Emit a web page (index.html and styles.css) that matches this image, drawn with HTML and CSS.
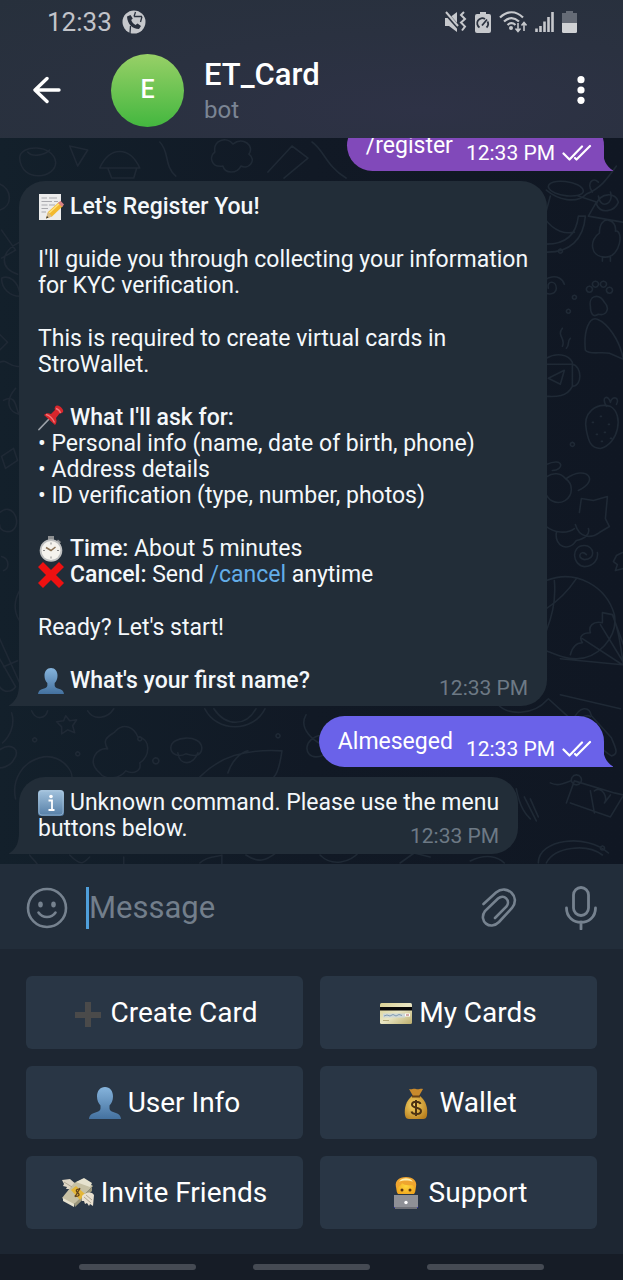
FILE: index.html
```html
<!DOCTYPE html>
<html lang="en">
<head>
<meta charset="utf-8">
<meta name="viewport" content="width=device-width, initial-scale=1">
<title>ET_Card</title>
<link rel="stylesheet" href="styles.css">
</head>
<body>
<svg class="defs" aria-hidden="true">
  <defs>
    <linearGradient id="g-bust" x1="0" y1="0" x2="0" y2="1"><stop offset="0" stop-color="#86b4dc"/><stop offset="1" stop-color="#44719f"/></linearGradient>
    <linearGradient id="g-info" x1="0" y1="0" x2="0" y2="1"><stop offset="0" stop-color="#a3c3de"/><stop offset="1" stop-color="#557ea6"/></linearGradient>
    <linearGradient id="g-card" x1="0" y1="0" x2="1" y2="1"><stop offset="0" stop-color="#d9cf90"/><stop offset=".5" stop-color="#e9e6c4"/><stop offset="1" stop-color="#bcae6c"/></linearGradient>
    <radialGradient id="g-bag" cx=".4" cy=".4" r=".7"><stop offset="0" stop-color="#f6d568"/><stop offset="1" stop-color="#b87f1e"/></radialGradient>
    <radialGradient id="g-face" cx=".5" cy=".5" r=".6"><stop offset="0" stop-color="#ffd63c"/><stop offset="1" stop-color="#f0a41c"/></radialGradient>
    <symbol id="bust" viewBox="0 0 32 32"><path fill="url(#g-bust)" d="M16 0c5 0 8 4 8 9.500c0 4-1.500 7-3.500 9v3c0 2 2 3 5 4c4 1.200 6 2.500 6.500 6.500H0c.5-4 2.500-5.300 6.500-6.500c3-1 5-2 5-4v-3c-2-2-3.500-5-3.500-9C8 4 11 0 16 0z"/></symbol>
    <symbol id="ticks" viewBox="0 0 30 18"><path d="M1.500 9.500 7.500 15.500 20 2.500M13 14 14.500 15.500 28 2" fill="none" stroke="#fff" stroke-width="2.200" stroke-linecap="round" stroke-linejoin="round"/></symbol>
    <symbol id="tail" viewBox="0 0 10 22"><path d="M10 0C10 11 7 17 0 21.500V22H10z" fill="currentColor"/></symbol>
  </defs>
</svg>

<div class="app">
  <header class="header">
    <div class="status">
      <span class="clock">12:33</span>
      <svg class="call" viewBox="0 0 24 24"><circle cx="12" cy="12" r="11.500" fill="#c6c8cc"/><path d="M5 6.500C5.500 14 10 19 17 19l2-3-3.500-2.500-2 1.500c-2-1-3.500-3-4.300-5l1.600-1.600L8.500 5z" fill="#2a313e"/><path d="M12 6.500 13.500 2M12 6.500h8M20 6.500 18.500 12M8.500 16 8 23" fill="none" stroke="#2a313e" stroke-width="1.300"/></svg>
      <span class="status-icons">
        <svg width="23" height="22" viewBox="0 0 23 22"><path d="M1 7h4l8-6v20l-8-6H1z" fill="#c6c8cc"/><path d="M0 0 15 17" stroke="#2b323f" stroke-width="4"/><path d="M2 1 14 15" stroke="#c6c8cc" stroke-width="2"/><path d="M20 1l-3 3 4 4-4 3.500 4 4-3 4" fill="none" stroke="#c6c8cc" stroke-width="2"/></svg>
        <svg width="16" height="22" viewBox="0 0 16 22"><path d="M5 1h6v3H5z" fill="#c6c8cc"/><rect x="0" y="3" width="16" height="19" rx="2" fill="#c6c8cc"/><path d="M4.500 16.500A5 5 0 0 1 10 8M12.500 10.500a5 5 0 0 1-1 6M7 14.500 12 8.500" fill="none" stroke="#2b323f" stroke-width="1.800"/></svg>
        <svg width="28" height="22" viewBox="0 0 28 22"><path d="M1 6.500C8-.5 17-.5 24 6.500M5 10.500c5-4.500 10-4.500 15 0M8.500 14c2.600-2.300 5.500-2.300 8 0" fill="none" stroke="#c6c8cc" stroke-width="2.200"/><circle cx="12" cy="17" r="2" fill="#c6c8cc"/><path d="M19 12v8M16.500 17.500 19 20.500l2.500-3M25 20v-8M22.500 14.500 25 11.500l2.500 3" fill="none" stroke="#c6c8cc" stroke-width="1.600"/></svg>
        <svg width="19" height="22" viewBox="0 0 19 22"><path d="M1.500 17.500V21M5.500 15V21M9.500 10.500V21M13.500 6V21M17.500 1V21" stroke="#c6c8cc" stroke-width="2.600"/></svg>
        <svg width="15" height="22" viewBox="0 0 15 22"><path d="M4 0h7v2h4v10H0V2h4z" fill="#656b76"/><path d="M0 12h15v8.500a1.500 1.500 0 0 1-1.500 1.500h-12A1.500 1.500 0 0 1 0 20.500z" fill="#d0d2d5"/></svg>
      </span>
    </div>
    <div class="titlebar">
      <button class="icon-btn" aria-label="Back"><svg width="28" height="28" viewBox="0 0 28 28"><path d="M26 14H2.500M14 2.500 2 14l12 11.500" fill="none" stroke="#fff" stroke-width="3.400" stroke-linecap="round" stroke-linejoin="round"/></svg></button>
      <div class="avatar">E</div>
      <div class="peer">
        <h1 class="peer-name">ET_Card</h1>
        <span class="peer-kind">bot</span>
      </div>
      <button class="icon-btn" aria-label="More options"><svg width="8" height="28" viewBox="0 0 8 28"><circle cx="4" cy="3.700" r="3.600" fill="#fff"/><circle cx="4" cy="14" r="3.600" fill="#fff"/><circle cx="4" cy="24.300" r="3.600" fill="#fff"/></svg></button>
    </div>
  </header>

  <main class="chat">
    <svg class="doodles" viewBox="0 0 623 725" preserveAspectRatio="xMidYMid slice" aria-hidden="true">
      <g fill="none" stroke-width="1.600" stroke-linecap="round" stroke-linejoin="round">
        <path d="M20 20c0-14 34-14 36 4 1 16-34 22-36-4zM28 14c4 5 16 4 22-2M70 8l18 4-10 16zM100 30c10-22 30-22 40 0zM108 30l4 10h22l3-10M160 4c10 10 4 24 16 34M215 14c-2-12 12-16 18-8 10-8 22 2 16 10 8 6 0 16-8 12-4 8-16 8-18 0-12 2-14-10-8-14zM268 34l24-26 16 12-24 20M312 4c12 8 14 24 34 36"/>
        <path d="M0 46c12 4 14 22 0 26M2 92l14 20-14 8M20 104c-20 10-20 26-2 32M2 140c8-4 16 4 18 14M2 140c0 10 8 18 18 18M0 196l8 8-8 8M0 224c8-4 10 6 20 4M4 262c14-8 12 12 16 14M16 250c-12 14-6 24 4 26M2 318l12-8 4 12-12 8zM0 374c12-10 20 6 16 14s-16 6-16-2M2 418c8 2 8 12 2 14M20 452c-10 18 0 30 0 30M0 500l20 44M0 520l16 28c-4 6-12 6-16 0M4 528l14-6"/>
        <path d="M12 574c4 12-2 24-9 30M32 572c4 10 14 8 16 0M66 577l4 5 7-1-4 6 2 7-7-3-6 4 0-7-5-5 7-1zM88 572c6 10 20 8 26-2M100 634c-14-12-2-26 8-24-8-12 6-14 8-18 8-8 18-4 22 6 14 2 12 20 2 26 2 8-6 12-14 8-6 8-20 10-26 2zM171 609c0-12 30-14 31 0 0 10-10 8-16 6-8 4-15 0-15-6zM178 614c2 14 16 12 20 0M16 660c-4-18 6-38 28-42 18-2 30 14 28 22M0 611c12-8 22 0 14 10-4 8-14 8-14 8M205 570c12 24 48 24 60 0M214 570c12 18 32 18 42 0M200 638c20-20 44-28 82-26-2 14-4 22-8 26M228 634c4-12 12-20 20-22M306 576c-8 14 8 26 16 30M322 596c-20 4-18 22-6 22s16-14 16-14"/>
        <path d="M30 716c2 4 12 10 8 16M70 716c12 12 14 8 20 2M124 718v12M200 724c8-8 20-6 22-8v10M246 716c12 8 20 6 30-2M320 716c12 12 30 8 40-4M400 724l14-10 16 4M470 722c16-8 28-4 34 2"/>
        <path d="M546 52c12 10 30 14 40 4 14-6 20-14 30-28M548 49c0-10 34-6 35 4 0 8-32 6-35-4zM550 58l-6 22c10 14 22 16 30 14M578 58l18 6-8 14 34 6M598 58c2 14 16 8 12-4M592 54c-6-8 0-16 6-10M596 66c4-12 20-12 22-2-4 10-18 12-22 2zM546 106c20 0 30-10 32-28h7c-2 24-16 36-38 36M599 95c0-20 18-14 16-2 8-2 6 26-10 26-16 0-16-18-6-24zM602 119v4M610 119v4M548 150c-2-8 8-8 8 0s-14 8-14-2 18-14 22-2M590 168c-2-10 8-14 14-4 6 6 2 14-6 12-6 4-8-2-8-8zM589 148a3 3 0 1 0 .1 0M595 143a3 3 0 1 0 .1 0M603 143a3 3 0 1 0 .1 0M609 149a3 3 0 1 0 .1 0M585 212c-2-20 4-34 12-31 10 4 22 20 26 40l-14-6c-8-2-20 2-24-3zM562 190c-6 8 4 10 0 18M570 200c-4 4 0 6-4 10"/>
        <path d="M546 220c10-6 22-4 26 4v24c-6 12-20 10-26 10M546 226h26M572 226c10 2 10 22 0 22M548 240l16-8-4 14zM586 292c-4-18 10-28 24-24 14 8 8 38-10 42-10 0-12-8-14-18zM606 268c-6-10 2-12 4-4 2-8 10-4 6 2M592 284h1M600 278h1M608 286h1M596 296h1M604 294h1M610 300h1M601 303h1"/>
        <path d="M546 326c18-8 18 6 6 6M545 352a13 13 0 1 0 20-12 13 13 0 0 0-18-2M566 340c20-14 34 2 12 12M579 374l2-14 12 2 14-4-2 22 4 8-10 6c-8 6-20 6-24-8M556 394c-2 14 12 20 20 8 8-2 14-6 12-12M546 388c8 6 20 8 28 2M586 416c-6-6-10 4-2 5 12 0 10-14 0-14-14 0-12 20 0 21 10 0 14-8 13-14M622 414l-6 3-3 6 4 3-2 6 8-2"/>
        <path d="M546 442c30-12 60 6 68 34 4 24-18 44-38 44-12 0-20-4-30-8M546 470c12-8 22-18 30-30M554 442c2 20-4 40-8 50M612 476l-10-2v10c-10-2-14 4-12 10-8 0-12 4-8 10-6 0-10 4-12 12M612 476l11 30M600 486l22 36M582 500l40 26M560 520l62 6M612 476c6 14 8 30 11 50"/>
        <path d="M573 581c6-14 16-14 18-4l20 22c4 10 8 16 0 18-8-4-24-22-26-28-8 2-12-2-12-8zM578 584c4-8 10-8 12-6M548 560l20 18M560 556l60 14M566 664l8-22 40 12 9 2M570 664l40 14 12-20M590 652l4 22M594 652c8-6 14 8 10 12l6-8M576 636a5 5 0 1 0 .1 0M516 650c4 20 10 26 14 30M524 658l12 24M530 660l8 18M538 724c0-24 48-30 70-10M546 724c8-16 40-20 56-8M550 644c8 4 14 0 20-2M497 565c10 12 36 12 50-4"/>
        <path d="M140 598a2 2 0 1 0 .1 0M35 599a2 2 0 1 0 .1 0M78 613a2 2 0 1 0 .1 0M156 619a3 3 0 1 0 .1 0M278 595a2 2 0 1 0 .1 0M560 111a2 2 0 1 0 .1 0M574 157a2 2 0 1 0 .1 0M568 171a2 2 0 1 0 .1 0M572 304a2 2 0 1 0 .1 0M542 615a2 2 0 1 0 .1 0M602 707a2 2 0 1 0 .1 0"/>
      </g>
    </svg>

    <div class="bubble out out-register">
      <span class="out-text">/register</span>
      <time class="stamp">12:33 PM</time>
      <svg class="ticks"><use href="#ticks"/></svg>
      <svg class="tail"><use href="#tail"/></svg>
    </div>

    <article class="bubble in">
      <p><svg class="emoji" viewBox="0 0 26 26"><path d="M1 0h22v26H1z" fill="#ececec"/><path d="M3.500 4H9M11 4h8M3.500 7.500H14M16 7.500h4M3.500 11h6M11 11h6M3.500 14.500H10M3.500 18H8" stroke="#a9a9ae" stroke-width="1"/><path d="M8 24.500 10 18 21 8l4 4L14 22.500z" fill="#f2b92f"/><path d="M11 19 22 9" stroke="#ffe27a" stroke-width="1.500"/><path d="M20 9l2.500-2.200 3.500 3.700-2 2.500z" fill="#d98183"/><path d="M8 24.500 10 18l4 4.500z" fill="#d8bd8c"/><path d="M8 24.500l1-2.500 1.500 1.500z" fill="#333"/></svg><strong>Let's Register You!</strong></p>
      <p>I'll guide you through collecting your information<br>for KYC verification.</p>
      <p>This is required to create virtual cards in<br>StroWallet.</p>
      <div>
        <p><svg class="emoji" viewBox="0 0 26 26"><path d="M1 24.500 12 13" stroke="#9ba1a8" stroke-width="1.800" stroke-linecap="round"/><path d="M17 2c1-2 3-2 5-.5s4 4 3 5.500-2.500 1.500-3.500 1.500L18 13c1 3 .5 5.500-1 7L6 10c2-2 4.500-2 7-1l4-4c-.5-1-.5-2 0-3z" fill="#d8262c"/><path d="M18 3.500c2 .5 4 3 4.500 4.500M8 9.500c3 .500 7 4 8.500 8" fill="none" stroke="#f4787a" stroke-width="1.300"/></svg><strong>What I'll ask for:</strong></p>
        <ul class="asks">
          <li>Personal info (name, date of birth, phone)</li>
          <li>Address details</li>
          <li>ID verification (type, number, photos)</li>
        </ul>
      </div>
      <p><svg class="emoji" viewBox="0 0 26 26"><path d="M10 0h6v4h-6zM20 3.500l3 2.500-2 2.500-3-2.500z" fill="#8d8f91"/><circle cx="13" cy="14.500" r="11.300" fill="#bfc0c0"/><circle cx="13" cy="14.500" r="9.500" fill="#f5f3ee"/><path d="M13 6.500v2M13 20.500v2M5 14.500h2M19 14.500h2" stroke="#8a8a8a"/><path d="M8 11.500 13 14.500 17.500 11" fill="none" stroke="#8b7355" stroke-width="1.500"/></svg><strong>Time:</strong> About 5 minutes<br><svg class="emoji" viewBox="0 0 26 26"><path d="M5 0l8 8 8-8 5 5-8 8 8 8-5 5-8-8-8 8-5-5 8-8-8-8z" fill="#ee1111"/></svg><strong>Cancel:</strong> Send <a href="#cancel">/cancel</a> anytime</p>
      <p>Ready? Let's start!</p>
      <div class="foot">
        <p><svg class="emoji"><use href="#bust"/></svg><strong>What's your first name?</strong></p>
        <time class="stamp">12:33 PM</time>
      </div>
      <svg class="tail"><use href="#tail"/></svg>
    </article>

    <div class="bubble out out-name">
      <span class="out-text">Almeseged</span>
      <time class="stamp">12:33 PM</time>
      <svg class="ticks"><use href="#ticks"/></svg>
      <svg class="tail"><use href="#tail"/></svg>
    </div>

    <article class="bubble in">
      <div>
        <p><svg class="emoji" viewBox="0 0 26 26"><rect width="26" height="26" rx="3.500" fill="url(#g-info)"/><rect x="1" y="1" width="24" height="24" rx="3" fill="none" stroke="#b4cce2" stroke-opacity=".5"/><circle cx="13" cy="6.500" r="1.800" fill="#fff"/><path d="M10.500 10.500h3.500V20M10.500 20h6" fill="none" stroke="#fff" stroke-width="1.800"/></svg>Unknown command. Please use the menu</p>
        <div class="foot">
          <p>buttons below.</p>
          <time class="stamp">12:33 PM</time>
        </div>
      </div>
      <svg class="tail"><use href="#tail"/></svg>
    </article>
  </main>

  <form class="composer">
    <button type="button" class="icon-btn" aria-label="Emoji"><svg width="42" height="42" viewBox="0 0 42 42"><circle cx="21" cy="21" r="19" fill="none" stroke="#76828f" stroke-width="2.600"/><ellipse cx="14.500" cy="17.500" rx="2.300" ry="3" fill="#76828f"/><ellipse cx="27.500" cy="17.500" rx="2.300" ry="3" fill="#76828f"/><path d="M12.500 25.500c4 6 13 6 17 0" fill="none" stroke="#76828f" stroke-width="2.600" stroke-linecap="round"/></svg></button>
    <span class="caret"></span>
    <input class="field" type="text" placeholder="Message" aria-label="Message">
    <button type="button" class="icon-btn clip" aria-label="Attach"><svg width="36" height="42" viewBox="0 0 36 42"><path d="M2.500 17 15 5.500C26-3.500 40 10 31 21L18 35C9 44-3 34 4 24L17 11.500c6-5 13 2 8.500 8L14 31" fill="none" stroke="#76828f" stroke-width="2.600" stroke-linecap="round"/></svg></button>
    <button type="button" class="icon-btn" aria-label="Voice message"><svg width="32" height="44" viewBox="0 0 32 44"><rect x="8.500" y="1.500" width="15" height="28" rx="7.500" fill="none" stroke="#76828f" stroke-width="2.800"/><path d="M1.500 22c0 19 29 19 29 0M16 36v7" fill="none" stroke="#76828f" stroke-width="2.800" stroke-linecap="round"/></svg></button>
  </form>

  <section class="keyboard" aria-label="Bot menu">
    <button class="key"><svg class="key-emoji" viewBox="0 0 32 32"><path d="M13 5h6v10h10v6H19v9h-6v-9H3v-6h10z" fill="#4a4a4a"/></svg>Create Card</button>
    <button class="key"><svg class="key-emoji" viewBox="0 0 32 32"><rect y="6" width="32" height="21" rx="1.500" fill="url(#g-card)"/><path d="M0 10h32v3.500H0z" fill="#080808"/><path d="M3 16.500h22v4H3z" fill="#cfd8d8"/><path d="M4 19l3-1 3 1 3-1.500 3 1.500 3-1.500 3 1" fill="none" stroke="#7f9bb3"/><path d="M25 16.500h5v3h-5z" fill="#fff"/><path d="M26 18h3" stroke="#a55"/><path d="M3 23.500h6" stroke="#b4ab7c"/></svg>My Cards</button>
    <button class="key"><svg class="key-emoji"><use href="#bust"/></svg>User Info</button>
    <button class="key"><svg class="key-emoji" viewBox="0 0 32 32"><path d="M9 2c3 1 4-1 7 0s4-1 7 0l-4 7h-6z" fill="#c98a2c"/><path d="M12 9h8c6 5 8 12 7 19-.5 3-2 4-4 4H9c-2 0-3.500-1-4-4-1-7 1-14 7-19z" fill="url(#g-bag)"/><path d="M12 9.500h8" stroke="#6b4315" stroke-width="2"/><path d="M20.500 17c-1-3-8.500-3-8.500.5 0 4.500 9 2 9 6.500 0 4-8.500 4-9.500.5M16 13v16" fill="none" stroke="#4b3213" stroke-width="2"/></svg>Wallet</button>
    <button class="key"><svg class="key-emoji" viewBox="0 0 32 32"><path d="M0 3l8-1 7 6-3 7-5-1 1-2-4 0 1-2-4-1 1-2z" fill="#ddd5c4"/><path d="M12 6l9-4 10 7-17 17-4 2-10-7z" fill="#c6c0a4"/><path d="M1 21l11 6v3L1 24zM14 5l8-4 8 5-2 4z" fill="#e6e2cf"/><path d="M12 27 30 10v4L13 30z" fill="#9c977c"/><path d="M9 13l5-4 9 8-5 6z" fill="#e4b638"/><path d="M18 13c-2-2-5 0-3 2s3 3 1 4-3-1-3-1M18 11l-5 9" fill="none" stroke="#62421a" stroke-width="1.300"/><path d="M20 19c3-4 10-5 12-1l-1 11-3-2-1 2-2-3-2 1-1-3-2 0z" fill="#e8e0d0"/><path d="M2 5l8 5M22 20l7 6M24 18l6 5" stroke="#a89f8c" stroke-width=".9"/></svg>Invite Friends</button>
    <button class="key"><svg class="key-emoji" viewBox="0 0 32 32"><path d="M4 31c-1-10 4-12 12-12s13 2 12 12z" fill="#3a3ab0"/><path d="M7 9c0-10 18-10 18 0 1 3 .5 6-1 8H8c-1.500-2-2-5-1-8z" fill="url(#g-face)"/><path d="M7 13C3 4 9 0 16 0s13 4 9 13c-.5-3-1.500-4.500-3-5-5 .5-8 0-10-2-1 3-4 3-5 7z" fill="#efa52f"/><path d="M9 4.500c3-4.500 11-4.500 14 0-4-1.500-10-1.500-14 0z" fill="#fff0ad"/><circle cx="12" cy="13" r="1.500" fill="#5b3512"/><circle cx="20" cy="13" r="1.500" fill="#5b3512"/><path d="M4 18h24v12H4z" fill="#8e9096"/><path d="M5 30h22v2H5z" fill="#6f7178"/><circle cx="16" cy="25.500" r="1.700" fill="#fff"/></svg>Support</button>
  </section>

  <nav class="navbar" aria-label="System navigation">
    <button class="pill" aria-label="Recents"></button>
    <button class="pill" aria-label="Home"></button>
    <button class="pill" aria-label="Back"></button>
  </nav>
</div>
</body>
</html>
```
FILE: styles.css
```css
* {
  box-sizing: border-box;
}

body {
  margin: 0;
  font-family: Roboto, "Noto Sans", sans-serif;
  font-size: 23px;
  line-height: 26px;
  color: #f4f8fb;
  background: #1d2632;
}

p,
ul,
h1 {
  margin: 0;
  padding: 0;
}

button {
  padding: 0;
  border: 0;
  background: none;
  font: inherit;
  color: inherit;
}

svg {
  display: block;
}

strong {
  font-weight: 500;
}

.defs {
  position: absolute;
  width: 0;
  height: 0;
}

.app {
  display: flex;
  flex-direction: column;
  height: 100vh;
}

/* Header */

.header {
  padding-bottom: 2px;
  background: radial-gradient(ellipse at 68% 80%, #2e3246 0, #2a3140 50%, #27303c 100%);
}

.status {
  display: flex;
  align-items: center;
  height: 44px;
  padding: 0 46px 0 47px;
  color: #c2c4ca;
}

.clock {
  font-size: 26px;
}

.call {
  width: 24px;
  height: 24px;
  margin-left: 10px;
}

.status-icons {
  display: flex;
  gap: 8px;
  margin-left: auto;
}

.titlebar {
  display: flex;
  align-items: center;
  height: 92px;
  padding: 0 38px 0 33px;
}

.icon-btn {
  flex: none;
}

.avatar {
  display: grid;
  place-items: center;
  width: 73px;
  height: 73px;
  margin-left: 50px;
  border-radius: 50%;
  background: linear-gradient(#98d067, #43b73f);
  color: #fff;
  font-size: 25px;
  font-weight: 500;
}

.peer {
  display: flex;
  flex: 1;
  flex-direction: column;
  gap: 4px;
  margin-left: 20px;
  padding-top: 3px;
}

.peer-name {
  font-size: 31px;
  font-weight: 500;
  line-height: 32px;
  color: #fff;
}

.peer-kind {
  font-size: 24px;
  line-height: 30px;
  color: #7b8594;
}

/* Chat */

.chat {
  position: relative;
  display: flex;
  flex: 1;
  flex-direction: column;
  justify-content: flex-end;
  gap: 10px;
  min-height: 0;
  padding: 0 19px 10px;
  overflow: hidden;
  background: linear-gradient(90deg, #13202b, #111925 50%, #101723);
}

.doodles {
  position: absolute;
  inset: 0;
  width: 100%;
  height: 100%;
  stroke: #1f2935;
}

.bubble {
  position: relative;
  flex: none;
  border-radius: 26px;
}

.in {
  display: flex;
  flex-direction: column;
  gap: 27px;
  align-self: flex-start;
  padding: 13px 19px 5px;
  border-bottom-left-radius: 0;
  background: #222d38;
  color: #222d38;
}

.in p,
.in ul {
  color: #f4f8fb;
}

.in a {
  color: #63ade8;
  text-decoration: none;
}

.emoji {
  display: inline-block;
  width: 26px;
  height: 26px;
  margin-right: 6px;
  vertical-align: bottom;
}

.asks {
  list-style: none;
}

.asks li::before {
  content: "• ";
}

.foot {
  display: flex;
  align-items: flex-end;
  justify-content: space-between;
}

.foot p {
  margin-bottom: 7px;
}

.stamp {
  font-size: 21px;
  color: #6d7985;
}

.out {
  display: flex;
  align-items: flex-end;
  align-self: flex-end;
  padding: 13px 12px 5px 19px;
  border-bottom-right-radius: 0;
  color: #6a62e9;
  background: #6a62e9;
}

.out-register {
  color: #8149ba;
  background: #8149ba;
}

.out-text {
  margin: 0 13px 7px 0;
  color: #fff;
}

.out .stamp {
  color: #fff;
}

.ticks {
  width: 30px;
  height: 18px;
  margin: 0 0 4px 7px;
}

.tail {
  position: absolute;
  bottom: 0;
  left: -10px;
  width: 10px;
  height: 22px;
}

.out .tail {
  right: -9px;
  left: auto;
  transform: scaleX(-1);
}

/* Composer */

.composer {
  display: flex;
  align-items: center;
  height: 85px;
  padding: 2px 26px 0;
  background: #222d3a;
}

.caret {
  width: 3px;
  height: 42px;
  margin-left: 18px;
  background: #4f9fdb;
}

.field {
  flex: 1;
  min-width: 0;
  padding: 0;
  border: 0;
  outline: 0;
  background: none;
  color: #fff;
  font: 31px Roboto, "Noto Sans", sans-serif;
}

.field::placeholder {
  color: #727e8b;
  opacity: 1;
}

.clip {
  margin-right: 48px;
}

/* Bot keyboard */

.keyboard {
  display: grid;
  grid-template-columns: 1fr 1fr;
  gap: 17px;
  padding: 27px 26px 25px;
  background: #1d2632;
}

.key {
  display: flex;
  align-items: center;
  justify-content: center;
  gap: 7px;
  height: 73px;
  border-radius: 6px;
  background: #293645;
  color: #fff;
  font-size: 28px;
}

.key-emoji {
  width: 32px;
  height: 32px;
}

.navbar {
  display: flex;
  align-items: center;
  justify-content: center;
  gap: 57px;
  height: 26px;
  background: #161c26;
}

.pill {
  width: 117px;
  height: 6px;
  border-radius: 3px;
  background: #454a53;
}
```
